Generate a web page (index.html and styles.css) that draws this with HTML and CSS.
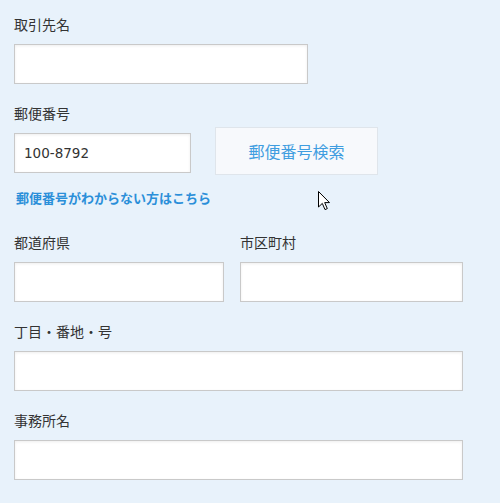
FILE: index.html
```html
<!DOCTYPE html>
<html lang="ja">
<head>
<meta charset="utf-8">
<link rel="stylesheet" href="styles.css">
</head>
<body>
<div class="form">
  <div class="group">
    <div class="label">取引先名</div>
    <input class="field w-name" type="text">
  </div>
  <div class="group group-zip">
    <div class="label">郵便番号</div>
    <div class="zip-row">
      <input class="field w-zip" type="text" value="100-8792">
      <button class="zip-btn" type="button">郵便番号検索</button>
    </div>
    <a class="zip-link" href="#">郵便番号がわからない方はこちら</a>
  </div>
  <div class="group cols">
    <div>
      <div class="label">都道府県</div>
      <input class="field w-full" type="text">
    </div>
    <div>
      <div class="label">市区町村</div>
      <input class="field w-full" type="text">
    </div>
  </div>
  <div class="group">
    <div class="label">丁目・番地・号</div>
    <input class="field w-full" type="text">
  </div>
  <div class="group">
    <div class="label">事務所名</div>
    <input class="field w-full" type="text">
  </div>
</div>
<svg class="cursor" width="13" height="20" viewBox="0 0 13 20">
  <path d="M0.5 0.5 L0.5 16 L4.3 12.4 L7 18.6 L9.3 17.6 L6.7 11.6 L11.5 11.6 Z" fill="#fff" stroke="#000" stroke-width="1" stroke-linejoin="miter"/>
</svg>
</body>
</html>
```
FILE: styles.css
```css
html, body {
  margin: 0;
  padding: 0;
}
body {
  background: #e8f2fb;
  font-family: "Noto Sans CJK JP", "Noto Sans", sans-serif;
  color: #333;
  width: 500px;
  height: 503px;
  overflow: hidden;
  position: relative;
}
.form {
  width: 449px;
  padding: 14px 0 0 14px;
}
.group {
  margin-bottom: 19px;
}
.label {
  font-size: 14px;
  line-height: 20px;
  margin-bottom: 10px;
}
.field {
  display: block;
  box-sizing: border-box;
  height: 40px;
  margin: 0;
  border: 1px solid #c9c9c9;
  border-radius: 0;
  background: #fff;
  box-shadow: inset 0 1px 3px rgba(0, 0, 0, 0.07);
  padding: 0 9px;
  font-family: "DejaVu Sans", "Noto Sans CJK JP", sans-serif;
  font-size: 13.5px;
  color: #333;
  outline: none;
}
.w-name { width: 294px; }
.w-zip { width: 177px; }
.w-full { width: 100%; }
.zip-row {
  display: flex;
  align-items: flex-start;
  gap: 24px;
}
.zip-btn {
  box-sizing: border-box;
  margin-top: -6px;
  width: 163px;
  height: 48px;
  background: #f7f9fc;
  border: 1px solid #dfe5eb;
  border-radius: 0;
  color: #3f9de0;
  font-family: "Noto Sans CJK JP", "Noto Sans", sans-serif;
  font-size: 16px;
  padding: 0;
}
.group-zip {
  margin-bottom: 24px;
}
.zip-link {
  display: block;
  margin-top: 13px;
  padding-left: 2px;
  font-size: 13px;
  line-height: 20px;
  font-weight: bold;
  color: #2b8fd9;
  text-decoration: none;
}
.cols {
  display: grid;
  grid-template-columns: 210px 1fr;
  column-gap: 16px;
}
.cursor {
  position: absolute;
  left: 318px;
  top: 191px;
}
```
